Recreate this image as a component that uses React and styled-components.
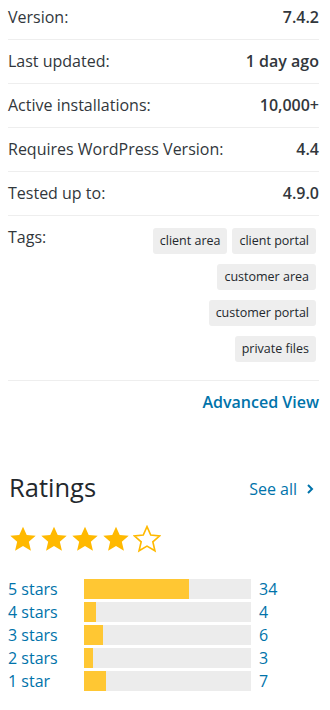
import React from 'react'
import styled, { createGlobalStyle } from 'styled-components'

const GlobalStyle = createGlobalStyle`
    body {
        margin: 0;
        background: #fff;
        font-family: 'Open Sans', 'Liberation Sans', sans-serif;
        color: #32373c;
    }
`

//STYLE//
const Page = styled.div`
    width: 330px;
    padding: 0 11px 0 8px;
    box-sizing: border-box;
    overflow: hidden;
`
const MetaList = styled.ul`
    list-style: none;
    margin: -5px 0 0 0;
    padding: 0;
`
const MetaRow = styled.li`
    display: flex;
    justify-content: space-between;
    align-items: flex-start;
    border-top: 1px solid #eee;
    padding: ${({ tags }) => (tags ? '11px 0 18px' : '11px 0')};
    font-size: 16px;
    line-height: 21px;
    border-bottom: ${({ tags }) => (tags ? '1px solid #eee' : 'none')};
`
const Label = styled.span`
    color: #32373c;
`
const Value = styled.strong`
    font-weight: 600;
    color: #32373c;
    text-align: right;
`
const TagList = styled.div`
    display: flex;
    flex-wrap: wrap;
    justify-content: flex-end;
    gap: 10px 5px;
    max-width: 170px;
    margin-top: 1px;
    margin-right: 3px;
`
const Tag = styled.a`
    background: #eee;
    border-radius: 3px;
    padding: 0 7px;
    font-size: 12.5px;
    line-height: 26px;
    color: #23282d;
    white-space: nowrap;
`
const AdvancedLink = styled.a`
    display: block;
    text-align: right;
    margin-top: 10px;
    font-size: 16px;
    font-weight: 600;
    line-height: 22px;
    color: #0073aa;
`
const RatingsHeader = styled.div`
    display: flex;
    justify-content: space-between;
    align-items: center;
    margin-top: 58px;
    padding-left: 1px;
`
const Heading = styled.h2`
    margin: 0;
    font-size: 25.5px;
    font-weight: 400;
    line-height: 32px;
    color: #23282d;
`
const SeeAll = styled.a`
    display: flex;
    align-items: center;
    gap: 9px;
    font-size: 16px;
    color: #0073aa;
    margin-right: 5px;
    margin-top: 3px;
`
const Stars = styled.div`
    display: flex;
    gap: 3px;
    margin: 22px 0 0 1px;
`
const Bars = styled.ul`
    list-style: none;
    margin: 26px 0 0;
    padding: 0;
    display: flex;
    flex-direction: column;
    gap: 3px;
`
const BarRow = styled.li`
    display: flex;
    align-items: center;
    height: 20px;
    font-size: 16px;
    color: #0073aa;
`
const BarLabel = styled.span`
    width: 76px;
`
const Track = styled.div`
    width: 167px;
    height: 20px;
    background: #ececec;
    margin-right: 8px;
`
const Fill = styled.div`
    height: 100%;
    background: #ffc733;
`
//STYLE//

const Star = ({ filled }) => (
    <svg width="28" height="28" viewBox="0 0 24 24">
        <path
            d="M12 1.4l3.2 7.2 7.7.7-5.9 5.1 1.8 7.7L12 18.1l-6.8 4 1.8-7.7-5.9-5.1 7.7-.7z"
            fill={filled ? '#ffb900' : '#fff'}
            stroke="#ffb900"
            strokeWidth={filled ? 0 : 1.4}
        />
    </svg>
)

const meta = [
    ['Version:', '7.4.2'],
    ['Last updated:', '1 day ago'],
    ['Active installations:', '10,000+'],
    ['Requires WordPress Version:', '4.4'],
    ['Tested up to:', '4.9.0'],
]
const tags = ['client area', 'client portal', 'customer area', 'customer portal', 'private files']
const ratings = [
    ['5 stars', 34],
    ['4 stars', 4],
    ['3 stars', 6],
    ['2 stars', 3],
    ['1 star', 7],
]
const total = ratings.reduce((sum, [, n]) => sum + n, 0)

export default function App() {
    return (
        <Page>
            <GlobalStyle />
            <MetaList>
                {meta.map(([label, value]) => (
                    <MetaRow key={label}>
                        <Label>{label}</Label>
                        <Value>{value}</Value>
                    </MetaRow>
                ))}
                <MetaRow tags>
                    <Label>Tags:</Label>
                    <TagList>
                        {tags.map((t) => (
                            <Tag key={t}>{t}</Tag>
                        ))}
                    </TagList>
                </MetaRow>
            </MetaList>
            <AdvancedLink>Advanced View</AdvancedLink>

            <RatingsHeader>
                <Heading>Ratings</Heading>
                <SeeAll>
                    See all
                    <svg width="8" height="12" viewBox="0 0 8 12">
                        <path d="M2 2l4 4-4 4" fill="none" stroke="#0073aa" strokeWidth="2" />
                    </svg>
                </SeeAll>
            </RatingsHeader>
            <Stars>
                {[1, 2, 3, 4, 5].map((i) => (
                    <Star key={i} filled={i <= 4} />
                ))}
            </Stars>
            <Bars>
                {ratings.map(([label, n]) => (
                    <BarRow key={label}>
                        <BarLabel>{label}</BarLabel>
                        <Track>
                            <Fill style={{ width: `${(n / total) * 100}%` }} />
                        </Track>
                        <span>{n}</span>
                    </BarRow>
                ))}
            </Bars>
        </Page>
    )
}
